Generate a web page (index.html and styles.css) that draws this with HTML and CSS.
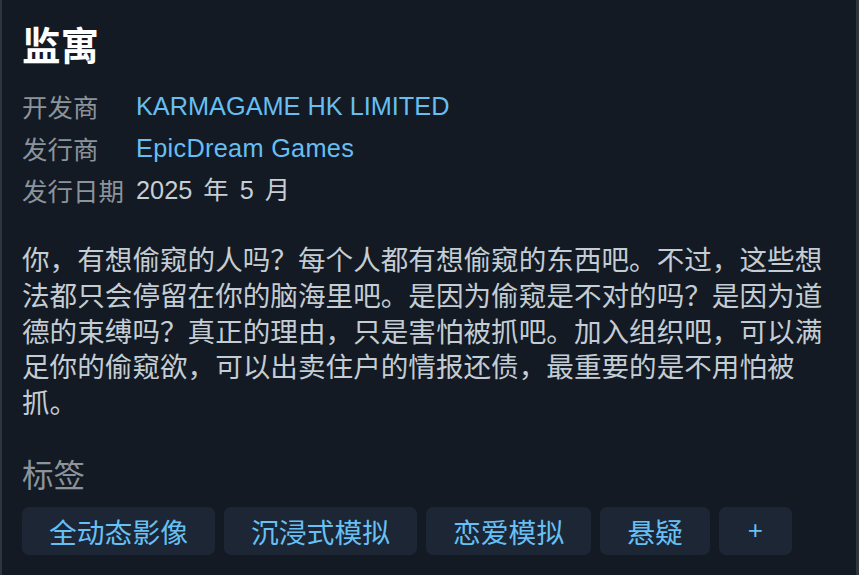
FILE: index.html
```html
<!DOCTYPE html>
<html lang="zh-CN">
<head>
<meta charset="utf-8">
<title>监寓</title>
<link rel="stylesheet" href="styles.css">
</head>
<body>
<main class="panel">
  <h1 class="title">监寓</h1>
  <dl class="info">
    <dt class="label">开发商</dt>
    <dd class="value link">KARMAGAME HK LIMITED</dd>
    <dt class="label">发行商</dt>
    <dd class="value link wide">EpicDream Games</dd>
    <dt class="label">发行日期</dt>
    <dd class="value date">2025 年 5 月</dd>
  </dl>
  <p class="desc">你，有想偷窥的人吗？每个人都有想偷窥的东西吧。不过，这些想法都只会停留在你的脑海里吧。是因为偷窥是不对的吗？是因为道德的束缚吗？真正的理由，只是害怕被抓吧。加入组织吧，可以满足你的偷窥欲，可以出卖住户的情报还债，最重要的是不用怕被抓。</p>
  <h2 class="tags-title">标签</h2>
  <ul class="tags">
    <li class="tag">全动态影像</li>
    <li class="tag">沉浸式模拟</li>
    <li class="tag">恋爱模拟</li>
    <li class="tag">悬疑</li>
    <li class="tag tag-plus">+</li>
  </ul>
</main>
</body>
</html>
```
FILE: styles.css
```css
html, body {
  margin: 0;
  padding: 0;
  background: #131a23;
}
body {
  font-family: "Liberation Sans", "Noto Sans CJK SC", sans-serif;
}
.panel {
  box-sizing: border-box;
  width: 859px;
  height: 575px;
  border-left: 2px solid #30353c;
  border-right: 3px solid #30353c;
  padding: 18px 20px 0 20px;
  overflow: hidden;
}
.title {
  margin: 0;
  font-family: "Noto Sans CJK SC", sans-serif;
  font-size: 38.5px;
  line-height: 50px;
  font-weight: 700;
  color: #ffffff;
}
.info {
  margin: 17px 0 0 0;
  display: grid;
  grid-template-columns: 114px auto;
  grid-auto-rows: 42px;
  align-items: center;
}
.label {
  margin: 0;
  font-family: "Noto Sans CJK SC", sans-serif;
  font-size: 25.5px;
  line-height: 42px;
  color: #8b939b;
}
.value {
  margin: 0;
  font-size: 25.3px;
  line-height: 42px;
  color: #c6ced6;
}
.value.link {
  color: #66bff2;
}
.value.wide {
  letter-spacing: 0.3px;
}
.value.date {
  word-spacing: 4px;
}
.desc {
  margin: 30px 0 0 0;
  font-family: "Noto Sans CJK SC", sans-serif;
  font-size: 27.6px;
  line-height: 35.75px;
  color: #c4ccd4;
}
.tags-title {
  margin: 33px 0 0 0;
  font-family: "Noto Sans CJK SC", sans-serif;
  font-size: 31.5px;
  line-height: 40px;
  font-weight: 400;
  color: #8b939b;
}
.tags {
  list-style: none;
  margin: 14px 0 0 0;
  padding: 0;
  display: flex;
  gap: 9px;
}
.tag {
  height: 48px;
  display: flex;
  align-items: center;
  padding: 0 27px;
  border-radius: 7px;
  background: #1c2634;
  font-family: "Noto Sans CJK SC", sans-serif;
  font-size: 27.8px;
  color: #67c0f4;
}
.tag-plus {
  padding: 0 29px;
  font-family: "Liberation Sans", sans-serif;
  font-size: 26px;
}
```
